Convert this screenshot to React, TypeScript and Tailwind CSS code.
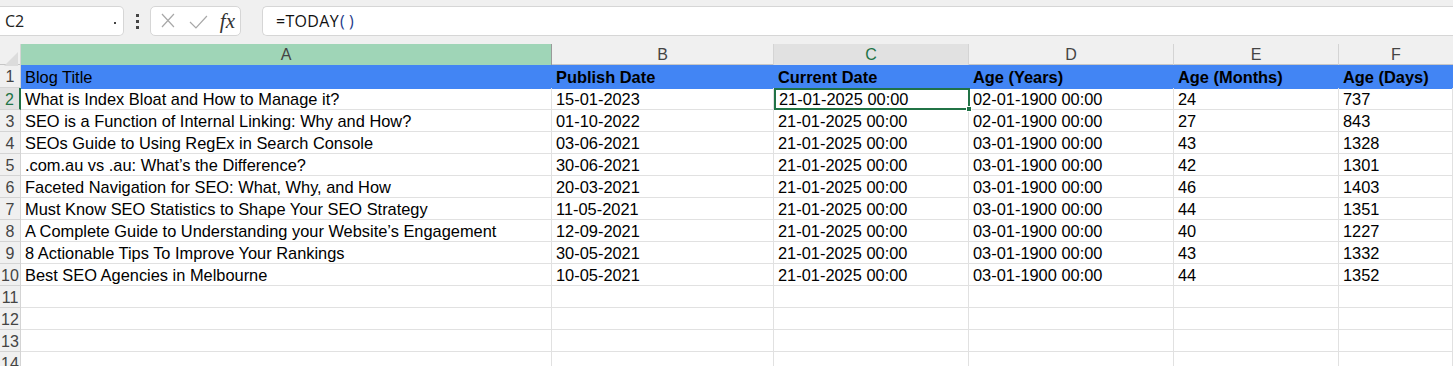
import React from "react";

interface Row {
  title: string;
  publish: string;
  current: string;
  years: string;
  months: string;
  days: string;
}

const rows: Row[] = [
  { title: "What is Index Bloat and How to Manage it?", publish: "15-01-2023", current: "21-01-2025 00:00", years: "02-01-1900 00:00", months: "24", days: "737" },
  { title: "SEO is a Function of Internal Linking: Why and How?", publish: "01-10-2022", current: "21-01-2025 00:00", years: "02-01-1900 00:00", months: "27", days: "843" },
  { title: "SEOs Guide to Using RegEx in Search Console", publish: "03-06-2021", current: "21-01-2025 00:00", years: "03-01-1900 00:00", months: "43", days: "1328" },
  { title: ".com.au vs .au: What’s the Difference?", publish: "30-06-2021", current: "21-01-2025 00:00", years: "03-01-1900 00:00", months: "42", days: "1301" },
  { title: "Faceted Navigation for SEO: What, Why, and How", publish: "20-03-2021", current: "21-01-2025 00:00", years: "03-01-1900 00:00", months: "46", days: "1403" },
  { title: "Must Know SEO Statistics to Shape Your SEO Strategy", publish: "11-05-2021", current: "21-01-2025 00:00", years: "03-01-1900 00:00", months: "44", days: "1351" },
  { title: "A Complete Guide to Understanding your Website’s Engagement", publish: "12-09-2021", current: "21-01-2025 00:00", years: "03-01-1900 00:00", months: "40", days: "1227" },
  { title: "8 Actionable Tips To Improve Your Rankings", publish: "30-05-2021", current: "21-01-2025 00:00", years: "03-01-1900 00:00", months: "43", days: "1332" },
  { title: "Best SEO Agencies in Melbourne", publish: "10-05-2021", current: "21-01-2025 00:00", years: "03-01-1900 00:00", months: "44", days: "1352" },
];

const gridCols = "grid grid-cols-[21px_531px_222px_195px_205px_165px_1fr]";
const cell = "h-[22px] border-r border-b border-[#e1e1e1] pl-[4px] leading-[23px] text-[16.4px] whitespace-nowrap overflow-hidden text-black";

const RowHeader: React.FC<{ n: number; active?: boolean }> = ({ n, active }) => (
  <div
    className={
      active
        ? "h-[22px] border-b border-[#d4d4d4] border-r-2 border-r-[#217346] bg-[#e1e1e1] text-[#217346] flex justify-center leading-[23px] whitespace-nowrap"
        : "h-[22px] border-b border-r border-[#d4d4d4] bg-[#f0f0f0] text-[#444] flex justify-center leading-[23px] whitespace-nowrap"
    }
  >
    {n}
  </div>
);

const App: React.FC = () => {
  return (
    <div className="w-[1453px] h-[366px] overflow-hidden bg-white font-['Liberation_Sans',Arial,sans-serif] text-[16px]">
      {/* formula bar */}
      <div className="h-[44px] bg-[#f0f0f0] flex items-start pt-[6px]">
        <div className="w-[124px] h-[30px] bg-white border border-[#d6d6d6] rounded-r-[5px] border-l-0 flex items-center justify-between pl-[5px] pr-[7px] text-[#222] font-['Open_Sans',sans-serif] text-[16px]">
          <span>C2</span>
          <span className="w-[2px] h-[2px] bg-[#444] mt-[4px]" />
        </div>
        <div className="w-[26px] h-[30px] flex flex-col items-center justify-center gap-[3px]">
          <span className="w-[3px] h-[3px] bg-[#444]" />
          <span className="w-[3px] h-[3px] bg-[#444]" />
          <span className="w-[3px] h-[3px] bg-[#444]" />
        </div>
        <div className="w-[91px] h-[30px] bg-white border border-[#d6d6d6] rounded-[5px] flex items-center pl-[6px] pr-[5px] gap-[8px]">
          <svg width="22" height="22" viewBox="0 0 22 22">
            <path d="M5 4 L17 17 M17 4 L5 17" stroke="#a8a8a8" strokeWidth="1.2" fill="none" />
          </svg>
          <svg width="22" height="22" viewBox="0 0 22 22">
            <path d="M3 12 L9 18 L20 6" stroke="#a8a8a8" strokeWidth="1.2" fill="none" />
          </svg>
          <span className="font-['Liberation_Serif',serif] italic text-[21px] text-[#333] leading-none ml-[3px]">fx</span>
        </div>
        <div className="ml-[21px] flex-1 h-[30px] bg-white border border-r-0 border-[#d6d6d6] rounded-l-[5px] flex items-center pl-[13px] text-[16px] text-[#111] font-['Open_Sans',sans-serif] tracking-[0.3px]">
          =TODAY<span className="text-[#1e3a8a] ml-[1px]">(</span>
          <span className="text-[#1e3a8a] ml-[4px]">)</span>
        </div>
      </div>

      {/* column headers */}
      <div className={`${gridCols} h-[21px] bg-[#f0f0f0] text-[#444] border-b border-[#c6c6c6]`}>
        <div className="border-r border-[#d4d4d4] relative">
          <svg className="absolute right-[2px] bottom-[2px]" width="14" height="14" viewBox="0 0 14 14">
            <path d="M14 0 L14 14 L0 14 Z" fill="#dcdcdc" />
          </svg>
        </div>
        <div className="bg-[#9fd5b7] border-r border-[#9a9a9a] text-center leading-[22px]">A</div>
        <div className="border-r border-[#d4d4d4] text-center leading-[22px]">B</div>
        <div className="bg-[#e1e1e1] border-r border-[#d4d4d4] border-b-2 border-b-[#217346] text-center leading-[22px] text-[#217346]">C</div>
        <div className="border-r border-[#d4d4d4] text-center leading-[22px]">D</div>
        <div className="border-r border-[#d4d4d4] text-center leading-[22px]">E</div>
        <div className="text-center leading-[22px] w-[114px]">F</div>
      </div>

      {/* row 1 */}
      <div className={`${gridCols} h-[23px] text-[16.4px]`}>
        <div className="h-[23px] border-b border-r border-[#d4d4d4] bg-[#f0f0f0] text-[#444] text-[16px] flex justify-center leading-[24px]">1</div>
        <div className="bg-[#4285f4] pl-[4px] leading-[24px] text-black">Blog Title</div>
        <div className="bg-[#4285f4] pl-[4px] leading-[24px] font-bold text-black">Publish Date</div>
        <div className="bg-[#4285f4] pl-[4px] leading-[24px] font-bold text-black">Current Date</div>
        <div className="bg-[#4285f4] pl-[4px] leading-[24px] font-bold text-black">Age (Years)</div>
        <div className="bg-[#4285f4] pl-[4px] leading-[24px] font-bold text-black">Age (Months)</div>
        <div className="bg-[#4285f4] pl-[4px] leading-[24px] font-bold text-black">Age (Days)</div>
      </div>

      {rows.map((r, i) => (
        <div key={i} className={gridCols}>
          <RowHeader n={i + 2} active={i === 0} />
          <div className={cell}>{r.title}</div>
          <div className={cell}>{r.publish}</div>
          {i === 0 ? (
            <div className="h-[22px] relative border-2 border-[#217346] pl-[3px] leading-[19px] text-[16.4px] whitespace-nowrap text-black -mr-[1px]">
              {r.current}
              <span className="absolute -right-[4px] -bottom-[4px] w-[6px] h-[6px] bg-[#217346] border border-white" />
            </div>
          ) : (
            <div className={cell}>{r.current}</div>
          )}
          <div className={cell}>{r.years}</div>
          <div className={cell}>{r.months}</div>
          <div className={cell}>{r.days}</div>
        </div>
      ))}

      {[11, 12, 13, 14].map((n) => (
        <div key={n} className={gridCols}>
          <RowHeader n={n} />
          <div className={cell} />
          <div className={cell} />
          <div className={cell} />
          <div className={cell} />
          <div className={cell} />
          <div className={cell} />
        </div>
      ))}
    </div>
  );
};

export default App;
